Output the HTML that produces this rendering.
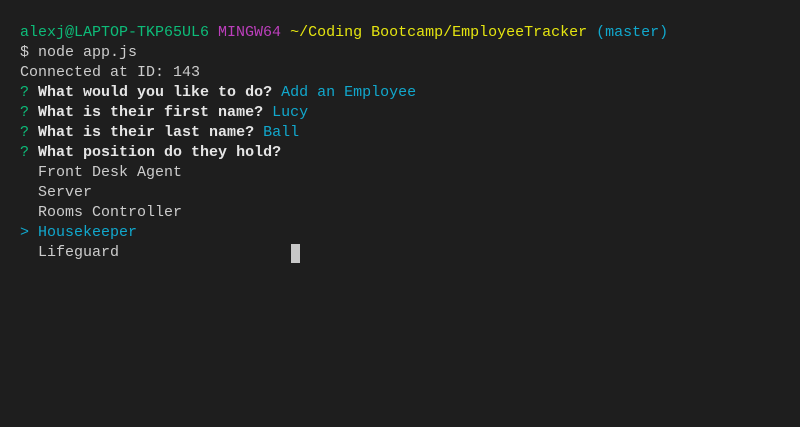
<!DOCTYPE html>
<html><head><meta charset="utf-8"><style>
body{margin:0;width:800px;height:427px;background:#1e1e1e;overflow:hidden;position:relative}
pre{margin:0;position:absolute;left:20px;top:23px;font-family:"Liberation Mono",monospace;font-size:15px;line-height:20px;color:#cccccc}
.g{color:#0dbc79}.m{color:#bc3fbc}.y{color:#e5e510}.c{color:#11a8cd}b{color:#e5e5e5}
.cur{position:absolute;left:291px;top:244px;width:9px;height:19px;background:#c8c8c8}
</style></head><body>
<pre><span class="g">alexj@LAPTOP-TKP65UL6</span> <span class="m">MINGW64</span> <span class="y">~/Coding Bootcamp/EmployeeTracker</span> <span class="c">(master)</span>
$ node app.js
Connected at ID: 143
<span class="g">?</span> <b>What would you like to do?</b> <span class="c">Add an Employee</span>
<span class="g">?</span> <b>What is their first name?</b> <span class="c">Lucy</span>
<span class="g">?</span> <b>What is their last name?</b> <span class="c">Ball</span>
<span class="g">?</span> <b>What position do they hold?</b>
  Front Desk Agent
  Server
  Rooms Controller
<span class="c">&gt; Housekeeper</span>
  Lifeguard</pre>
<div class="cur"></div>
</body></html>
